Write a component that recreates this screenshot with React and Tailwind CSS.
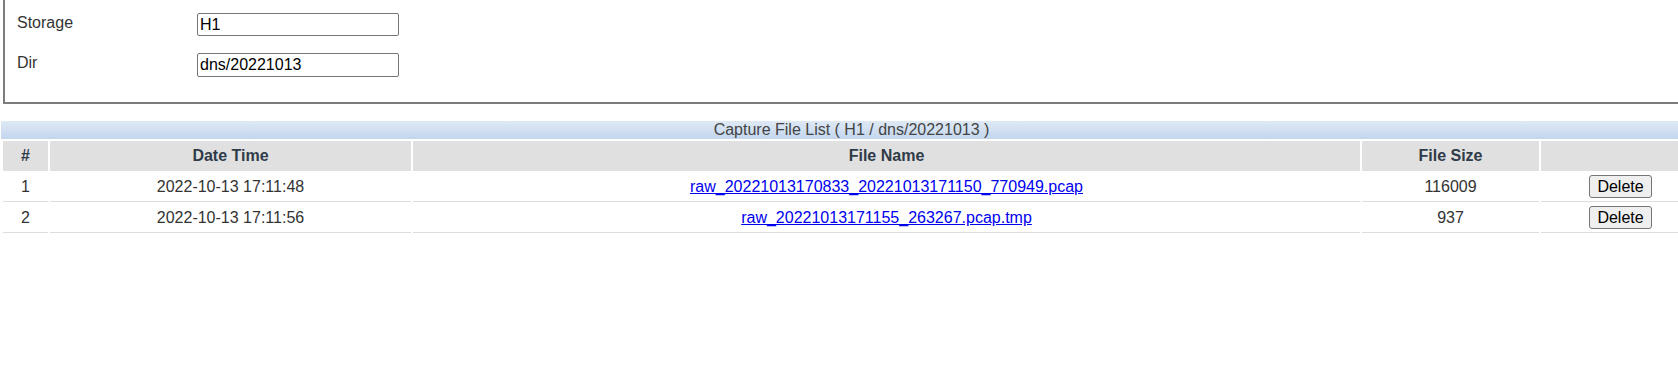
const files = [
  { id: 1, time: "2022-10-13 17:11:48", name: "raw_20221013170833_20221013171150_770949.pcap", size: "116009" },
  { id: 2, time: "2022-10-13 17:11:56", name: "raw_20221013171155_263267.pcap.tmp", size: "937" },
];

export default function App() {
  return (
    <div className="h-[383px] w-[1678px] overflow-hidden bg-white font-['Liberation_Sans',Arial,sans-serif] text-[16px] text-[#333]">
      <div className="ml-[3px] w-[1700px] border-2 border-t-0 border-[#7c7c7c] pb-[22px] pl-[12px]">
        <div className="flex h-10">
          <label className="mt-[11px] w-[180px]">Storage</label>
          <input
            defaultValue="H1"
            className="mt-[13px] h-[23px] w-[202px] rounded-[2px] border border-[#767676] px-[2px] text-[16px] text-black outline-none"
          />
        </div>
        <div className="flex h-10">
          <label className="mt-[11px] w-[180px]">Dir</label>
          <input
            defaultValue="dns/20221013"
            className="mt-[13px] h-[24px] w-[202px] rounded-[2px] border border-[#767676] px-[2px] text-[16px] text-black outline-none"
          />
        </div>
      </div>

      <table className="mt-[17px] ml-px w-[1701px] table-fixed border-separate border-spacing-[2px]">
        <caption className="h-[18px] bg-linear-to-b from-[#dfe9f5] to-[#c3d6ee] leading-[18px] text-[#444]">
          Capture File List ( H1 / dns/20221013 )
        </caption>
        <thead>
          <tr className="bg-[#e0e0e0] text-[#2f3b48]">
            <th className="h-[30px] w-[45px] font-bold">#</th>
            <th className="w-[361px] font-bold">Date Time</th>
            <th className="w-[947px] font-bold">File Name</th>
            <th className="w-[177px] font-bold">File Size</th>
            <th className="w-[159px]"></th>
          </tr>
        </thead>
        <tbody>
          {files.map((f) => (
            <tr key={f.id} className="text-center">
              <td className="h-[29px] border-b border-[#dddddd]">{f.id}</td>
              <td className="border-b border-[#dddddd]">{f.time}</td>
              <td className="border-b border-[#dddddd]">
                <a href="#" className="text-[#0000ee] underline">{f.name}</a>
              </td>
              <td className="border-b border-[#dddddd]">{f.size}</td>
              <td className="border-b border-[#dddddd]">
                <button className="h-[23px] rounded-[3px] border border-[#767676] bg-[#efefef] px-[7px] text-[16px] leading-[19px] text-black">
                  Delete
                </button>
              </td>
            </tr>
          ))}
        </tbody>
      </table>
    </div>
  );
}
